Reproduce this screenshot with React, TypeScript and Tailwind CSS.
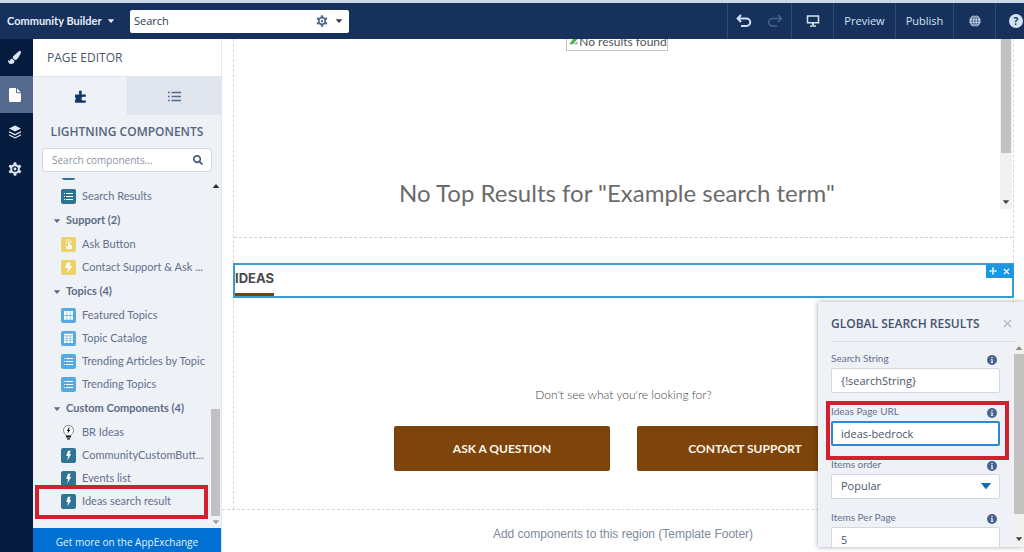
import React, { useState } from 'react';
import { FaPaintBrush, FaSearch } from 'react-icons/fa';
import { clsx } from 'clsx';

type IconKind = 'list' | 'touch' | 'bolt' | 'grid' | 'table' | 'bulb' | 'custom';

interface ComponentItem {
  name: string;
  icon: IconKind;
  color: string;
}

interface ComponentGroup {
  title: string;
  items: ComponentItem[];
}

const GROUPS: ComponentGroup[] = [
  {
    title: 'Support (2)',
    items: [
      { name: 'Ask Button', icon: 'touch', color: 'bg-[#ecd06a]' },
      { name: 'Contact Support & Ask ...', icon: 'bolt', color: 'bg-[#ecd06a]' },
    ],
  },
  {
    title: 'Topics (4)',
    items: [
      { name: 'Featured Topics', icon: 'grid', color: 'bg-[#56aadf]' },
      { name: 'Topic Catalog', icon: 'table', color: 'bg-[#56aadf]' },
      { name: 'Trending Articles by Topic', icon: 'list', color: 'bg-[#56aadf]' },
      { name: 'Trending Topics', icon: 'list', color: 'bg-[#56aadf]' },
    ],
  },
  {
    title: 'Custom Components (4)',
    items: [
      { name: 'BR Ideas', icon: 'bulb', color: 'bg-transparent' },
      { name: 'CommunityCustomButt...', icon: 'custom', color: 'bg-[#2f7494]' },
      { name: 'Events list', icon: 'custom', color: 'bg-[#2f7494]' },
      { name: 'Ideas search result', icon: 'custom', color: 'bg-[#2f7494]' },
    ],
  },
];

const Caret = ({ className }: { className?: string }) => (
  <svg viewBox="0 0 8 5" className={clsx('shrink-0', className)} fill="currentColor" aria-hidden="true">
    <path d="M0.5 0h7a.4.4 0 0 1 .3.7L4.4 4.7a.5.5 0 0 1-.8 0L.2.7A.4.4 0 0 1 .5 0z" />
  </svg>
);

const GearIcon = ({ className }: { className?: string }) => (
  <svg viewBox="0 0 24 24" className={className} aria-hidden="true">
    <g fill="currentColor">
      <rect x="9.5" y="0.5" width="5" height="23" rx="1.5" />
      <rect x="9.5" y="0.5" width="5" height="23" rx="1.5" transform="rotate(60 12 12)" />
      <rect x="9.5" y="0.5" width="5" height="23" rx="1.5" transform="rotate(120 12 12)" />
    </g>
    <circle cx="12" cy="12" r="6.6" fill="var(--hole)" stroke="currentColor" strokeWidth="3.4" />
    <circle cx="12" cy="12" r="2.4" fill="currentColor" />
  </svg>
);

const ComponentIcon = ({ kind }: { kind: IconKind }) => {
  switch (kind) {
    case 'list':
      return (
        <svg viewBox="0 0 15 15" className="size-[15px]" stroke="white" strokeWidth="1.1">
          <path d="M5 4.5h7M5 7.5h7M5 10.5h7M3 4.5h1M3 7.5h1M3 10.5h1" />
        </svg>
      );
    case 'touch':
      return (
        <svg viewBox="0 0 15 15" className="size-[15px]" fill="white">
          <path d="M7 5a.8.8 0 0 1 1.6 0v2.6l2 .6c.6.2.8.6.7 1.1l-.5 2.7H6.6L4.3 9.4c.5-.7 1.3-.6 1.9 0L7 10z" />
          <path d="M5.6 6.6a2.5 2.5 0 1 1 4.2-.2" fill="none" stroke="white" strokeWidth="0.8" />
        </svg>
      );
    case 'bolt':
      return (
        <svg viewBox="0 0 15 15" className="size-[15px]" fill="white">
          <path d="M6 2.5h4L8.6 6h3L6 13l1.3-5H3.8z" />
        </svg>
      );
    case 'grid':
      return (
        <svg viewBox="0 0 15 15" className="size-[15px]" fill="white">
          <path d="M3 3h2.6v4H3zM6.2 3h2.6v4H6.2zM9.4 3H12v4H9.4zM3 7.8h2.6v4H3zM6.2 7.8h2.6v4H6.2zM9.4 7.8H12v4H9.4z" />
        </svg>
      );
    case 'table':
      return (
        <svg viewBox="0 0 15 15" className="size-[15px]" fill="white">
          <path d="M3 2.8h9v1.8H3zM3 5.2h2.6v1.8H3zM6.2 5.2h2.6v1.8H6.2zM9.4 5.2H12v1.8H9.4zM3 7.6h2.6v1.8H3zM6.2 7.6h2.6v1.8H6.2zM9.4 7.6H12v1.8H9.4zM3 10h2.6v2H3zM6.2 10h2.6v2H6.2zM9.4 10H12v2H9.4z" />
        </svg>
      );
    case 'bulb':
      return (
        <svg viewBox="0 0 15 15" className="size-[15px]">
          <path
            d="M5 10.4C4.6 9 2.5 8.2 2.5 5.4a5 5 0 0 1 10 0c0 2.8-2.1 3.6-2.5 5z"
            fill="white"
            stroke="#555"
            strokeWidth="0.7"
          />
          <path d="M7.8 2.5L5.9 6h1.3l-.7 2.8L9.2 5.1H7.9l.8-2.6z" fill="#111" />
          <path d="M5 10.8h5v1.8H5zM6 13.2h3v1.3H6z" fill="#111" />
        </svg>
      );
    default:
      return (
        <svg viewBox="0 0 15 15" className="size-[15px]" fill="white">
          <path d="M7 2.8h2.6L8.5 6h1.7L6.3 12.4l.8-4.4H5.2z" />
        </svg>
      );
  }
};

const ComponentRow = ({ item }: { item: ComponentItem }) => (
  <li className="flex h-[23px] items-center gap-[6px] pl-7">
    <span className={clsx('flex size-[15px] shrink-0 rounded-[2px]', item.color)}>
      <ComponentIcon kind={item.icon} />
    </span>
    <span className="whitespace-nowrap text-[11px] text-[#64708e]">{item.name}</span>
  </li>
);

const TopBar = () => (
  <header className="flex h-[39px] shrink-0 items-stretch border-t-[3px] border-[#c9d8e6] bg-[#16325c] text-[11px] text-[#d3e1f5]">
    <button className="flex w-[130px] items-center gap-[6px] whitespace-nowrap pl-[7px] font-['Lato',sans-serif] font-bold text-[#e6eefa]">
      Community Builder
      <Caret className="h-1 w-[6px]" />
    </button>
    <div className="flex items-center">
      <button className="flex h-[23px] w-[219px] items-center rounded-[2px] bg-white px-1 text-[#2b3a55] [--hole:#fff]">
        <span className="flex-1 text-left">Search</span>
        <GearIcon className="size-3 text-[#54698d]" />
        <Caret className="ml-2 mr-[3px] h-1 w-[6px]" />
      </button>
    </div>
    <div className="ml-auto flex items-stretch [&>*]:border-l [&>*]:border-[#2f4a73]">
      <div className="flex w-16 items-center justify-around">
        <button aria-label="Undo">
          <svg viewBox="0 0 16 14" className="h-[14px] w-4" fill="none" stroke="currentColor" strokeWidth="2">
            <path d="M2 4.5h8.500a3.700 3.700 0 0 1 0 7.500H5" />
            <path d="M5 1L1.600 4.500 5 8" />
          </svg>
        </button>
        <button aria-label="Redo" className="text-[#48638a]">
          <svg viewBox="0 0 16 14" className="h-[14px] w-4" fill="none" stroke="currentColor" strokeWidth="1.6">
            <path d="M14 4.5H5.500a3.700 3.700 0 0 0 0 7.500H10" />
            <path d="M11 1l3.400 3.500L11 8" />
          </svg>
        </button>
      </div>
      <button aria-label="Desktop view" className="flex w-[42px] items-center justify-center">
        <svg viewBox="0 0 14 12" className="h-3 w-[14px]" fill="none" stroke="currentColor" strokeWidth="1.5">
          <path d="M1.5 1h11v6.800h-11z" />
          <path d="M7 8v2" strokeWidth="2" />
          <path d="M4 11h6" />
        </svg>
      </button>
      <button className="w-[62px]">Preview</button>
      <button className="w-[58px]">Publish</button>
      <button aria-label="Language" className="flex w-[42px] items-center justify-center">
        <svg viewBox="0 0 12 12" className="size-3">
          <circle cx="6" cy="6" r="5.7" fill="currentColor" />
          <g fill="none" stroke="#16325c" strokeWidth="0.6">
            <path d="M6 0v12M0 6h12M1 3.2h10M1 8.8h10" />
            <ellipse cx="6" cy="6" rx="2.8" ry="5.7" />
          </g>
        </svg>
      </button>
      <button aria-label="Help" className="flex w-[29px] items-center overflow-hidden pl-[13px]">
        <span className="flex size-[14px] shrink-0 items-center justify-center rounded-full bg-[#d3e1f5] text-[10px] font-bold text-[#16325c]">
          ?
        </span>
      </button>
    </div>
  </header>
);

const Rail = () => (
  <nav className="flex w-[33px] shrink-0 flex-col bg-[#061c3f] text-[#dfe7f2] [--hole:#061c3f] [&>button]:flex [&>button]:h-[37px] [&>button]:items-center [&>button]:justify-center [&>button]:pr-1">
    <button aria-label="Branding">
      <FaPaintBrush className="size-[13px]" />
    </button>
    <button aria-label="Page editor" className="bg-[#566a90] text-white">
      <svg viewBox="0 0 12 14" className="h-[14px] w-3" fill="currentColor">
        <path d="M1.5 0H7v4a1.200 1.200 0 0 0 1.200 1.200H12v7.300A1.500 1.500 0 0 1 10.500 14h-9A1.500 1.500 0 0 1 0 12.500v-11A1.500 1.500 0 0 1 1.500 0z" />
        <path d="M8 .3L11.700 4.300H8.400A.4.400 0 0 1 8 3.900z" />
      </svg>
    </button>
    <button aria-label="Page manager">
      <svg viewBox="0 0 14 14" className="size-[14px]" fill="currentColor">
        <path d="M7 .5l6 3-6 3-6-3z" />
        <path d="M1 6l6 3 6-3v1.400l-6 3-6-3zM1 9.300l6 3 6-3v1.300l-6 3-6-3z" />
      </svg>
    </button>
    <button aria-label="Settings">
      <GearIcon className="size-[14px]" />
    </button>
  </nav>
);

const Sidebar = () => {
  const [query, setQuery] = useState('');

  return (
    <aside className="relative flex w-[189px] shrink-0 flex-col border-r border-[#e3e6ec] bg-[#eef1f6]">
      <h2 className="h-[37px] shrink-0 bg-white pl-[14px] text-xs font-medium leading-[37px] text-[#4a5568]">PAGE EDITOR</h2>

      <div className="flex h-[39px] shrink-0 border-t border-[#dde2ea]">
        <button aria-label="Components" className="flex flex-1 items-center justify-center text-[#0f3a66]">
          <svg viewBox="0 0 11 13" className="h-[13px] w-[11px]" fill="currentColor">
            <path d="M1 4.500h2.800c.5 0 .6-.5.400-.9-.8-1.400-.1-3.200 1.200-3.200s2 1.800 1.200 3.200c-.2.400-.1.900.4.900h2.900c.6 0 1 .4 1 1v1.300H8.500c-1.300 0-2 .8-2 1.900s.7 1.900 2 1.900h2.400v1.200c0 .6-.4 1-1 1H1c-.6 0-1-.4-1-1V9.700h.7V7.600H0V5.500c0-.6.4-1 1-1z" />
          </svg>
        </button>
        <button aria-label="Page structure" className="flex flex-1 items-center justify-center bg-[#e0e5ee] text-[#54698d]">
          <svg viewBox="0 0 13 11" className="h-[11px] w-[13px]" stroke="currentColor" strokeWidth="1.3">
            <path d="M3.5 1.5H13M3.5 5.5H13M3.5 9.5H13M0 1.5h1.700M0 5.5h1.700M0 9.5h1.700" />
          </svg>
        </button>
      </div>

      <h3 className="h-[33px] shrink-0 text-center text-xs font-semibold leading-[34px] text-[#54647f]">LIGHTNING COMPONENTS</h3>

      <div className="mx-[9px] flex h-6 shrink-0 items-center rounded-[3px] border border-[#d3d8e0] bg-white pl-[9px] pr-2">
        <input
          type="text"
          aria-label="Search components"
          placeholder="Search components..."
          value={query}
          onChange={e => setQuery(e.target.value)}
          className="min-w-0 flex-1 text-[10px] outline-none placeholder:text-[#8a93a3]"
        />
        <FaSearch className="size-[10px] text-[#3c4f70]" />
      </div>

      {/* Component list with its scroll track */}
      <div className="mt-[6px] flex min-h-0 flex-1">
        <div className="min-w-0 flex-1 overflow-hidden font-['Lato',sans-serif]">
          <div className="mb-[5px] ml-[29px] h-[2px] w-[13px] rounded-b-[2px] bg-[#2f7494]"></div>
          <ul>
            <ComponentRow item={{ name: 'Search Results', icon: 'list', color: 'bg-[#2f7494]' }} />
          </ul>
          {GROUPS.map(group => (
            <section key={group.title}>
              <h4 className="flex h-[25px] items-center gap-[6px] pl-[21px] text-[11px] font-bold text-[#5d6b88]">
                <Caret className="h-1 w-[6px]" />
                {group.title}
              </h4>
              <ul>
                {group.items.map(item => (
                  <ComponentRow key={item.name} item={item} />
                ))}
              </ul>
            </section>
          ))}
        </div>
        <div className="flex w-[11px] shrink-0 flex-col items-center pb-1 pt-[6px]">
          <Caret className="h-1 w-[6px] rotate-180 text-[#333]" />
          <div className="flex-[220]"></div>
          <div className="w-[9px] flex-[107] bg-[#c1c1c1]"></div>
          <Caret className="mt-1 h-1 w-[6px] text-[#999]" />
        </div>
      </div>

      <button className="h-6 shrink-0 bg-[#0070d2] pt-1 text-[10px] font-medium text-[#e4f0fc]">Get more on the AppExchange</button>

      <div className="pointer-events-none absolute bottom-[33px] left-[2px] h-[34px] w-[173px] border-4 border-[#d3202f]"></div>
    </aside>
  );
};

const Field = ({ id, label, children }: { id: string; label: string; children: React.ReactNode }) => (
  <div className="h-[53px] shrink-0">
    <div className="flex h-4 items-start justify-between pr-[3px]">
      <label htmlFor={id} className="font-['Lato',sans-serif] text-[10px] leading-3 text-[#64708e]">{label}</label>
      <svg viewBox="0 0 10 10" className="mt-[3px] size-[10px]" role="img" aria-label="Info">
        <circle cx="5" cy="5" r="5" fill="#4a6290" />
        <path d="M4.300 2h1.400v1.300H4.300zM3.900 4.200h1.800v3h.5V8H3.900v-.8h.5V5h-.5z" fill="#eef1f6" />
      </svg>
    </div>
    {children}
  </div>
);

const PropertyPanel = () => {
  const [order, setOrder] = useState('Popular');

  return (
    <div className="absolute bottom-[5px] right-0 flex h-[245px] w-[206px] flex-col bg-[#eef1f6] font-['Open_Sans',sans-serif] shadow-[0_0_5px_rgba(0,0,0,0.35)]">
      <div className="ml-[13px] mr-2 flex h-10 shrink-0 items-center justify-between border-b border-[#d8dde6] pt-1">
        <h2 className="whitespace-nowrap text-xs font-semibold text-[#44536e]">GLOBAL SEARCH RESULTS</h2>
        <button aria-label="Close" className="mr-1 text-[#a8b0bd]">
          <svg viewBox="0 0 10 10" className="size-[9px]" stroke="currentColor" strokeWidth="1.3">
            <path d="M1 1l8 8M9 1L1 9" />
          </svg>
        </button>
      </div>

      <div className="flex min-h-0 flex-1">
        <form className="flex min-w-0 flex-1 flex-col overflow-hidden pl-[13px] pr-[13px] pt-[10px] text-[11px] text-[#4a5568]">
          <Field id="search-string" label="Search String">
            <input id="search-string" defaultValue="{!searchString}" className="h-[25px] w-full rounded-[2px] border border-[#d3d8e0] bg-white px-[9px] outline-none" />
          </Field>
          <Field id="ideas-url" label="Ideas Page URL">
            <input id="ideas-url" defaultValue="ideas-bedrock" className="h-[25px] w-full rounded-[2px] border-2 border-[#2f86d6] bg-white px-2 outline-none" />
          </Field>
          <Field id="items-order" label="Items order">
            <div className="relative">
              <select
                id="items-order"
                value={order}
                onChange={e => setOrder(e.target.value)}
                className="h-[25px] w-full appearance-none rounded-[2px] border border-[#d3d8e0] bg-white px-[9px] outline-none"
              >
                <option>Popular</option>
                <option>Recent</option>
              </select>
              <Caret className="pointer-events-none absolute right-[9px] top-[9px] h-[6px] w-[10px] text-[#0f6cbd]" />
            </div>
          </Field>
          <Field id="items-per-page" label="Items Per Page">
            <input id="items-per-page" defaultValue="5" className="h-[25px] w-full rounded-[2px] border border-[#d3d8e0] bg-white px-[9px] outline-none" />
          </Field>
        </form>
        <div className="flex w-[11px] shrink-0 flex-col items-center bg-[#f1f1f1] pb-[6px] pt-1">
          <Caret className="h-1 w-[6px] rotate-180 text-[#8f8f8f]" />
          <div className="mt-1 w-[10px] flex-[160] bg-[#c1c1c1]"></div>
          <div className="flex-[23]"></div>
          <Caret className="h-1 w-[6px] text-[#444]" />
        </div>
      </div>

      <div className="pointer-events-none absolute left-2 top-[99px] h-[59px] w-[183px] border-4 border-[#d3202f]"></div>
    </div>
  );
};

const Canvas = () => (
  <main className="relative flex min-w-0 flex-1 flex-col overflow-hidden bg-white font-['Lato',sans-serif]">
    <div className="ml-[11px] mr-[10px] flex flex-1 flex-col border-x border-dashed border-[#d9d9d9]">
      {/* Top results region */}
      <section className="h-[199px] shrink-0 border-b border-dashed border-[#d0d0d0]">
        <div className="flex h-[170px] pr-[1px]">
          <div className="flex min-w-0 flex-1 flex-col items-center overflow-hidden">
            <div className="flex h-3 shrink-0 items-end border-x border-b border-[#c4c4c4] text-xs text-[#555]">
              <svg viewBox="0 0 12 8" className="mb-[5px] h-[6px] w-3">
                <path d="M1 7L6 0h6L6 7z" fill="#4caf50" />
                <path d="M7 7l5-4v4z" fill="#9aa8b8" />
              </svg>
              No results found
            </div>
            <h1 className="mt-auto whitespace-nowrap text-2xl text-[#6b6b6b]">No Top Results for "Example search term"</h1>
          </div>
          <div className="flex w-3 shrink-0 flex-col items-center bg-[#f1f1f1] pb-[5px]">
            <div className="h-[114px] w-[10px] bg-[#c1c1c1]"></div>
            <Caret className="mt-auto h-1 w-[6px] text-[#444]" />
          </div>
        </div>
      </section>

      {/* Selected component */}
      <section className="relative -mx-px mt-[25px] flex h-[35px] shrink-0 items-stretch border-2 border-[#3a9bd0]">
        <h2 className="flex items-center border-b-[3px] border-[#7a430c] font-['Inter',sans-serif] text-[13px] font-bold text-[#4a4a4a]">IDEAS</h2>
        <div className="absolute -right-px -top-px flex h-[14px] w-[27px] items-center justify-around bg-[#1b96e0] text-white">
          <button aria-label="Move">
            <svg viewBox="0 0 8 8" className="size-2" stroke="currentColor" strokeWidth="1.2" fill="currentColor">
              <path d="M4 1v6M1 4h6" />
              <path d="M4 0l1.200 1.500H2.800zM4 8l1.200-1.500H2.800zM0 4l1.500-1.200v2.400zM8 4L6.500 2.800v2.400z" stroke="none" />
            </svg>
          </button>
          <button aria-label="Remove">
            <svg viewBox="0 0 8 8" className="size-[7px]" stroke="currentColor" strokeWidth="1.6">
              <path d="M1 1l6 6M7 1L1 7" />
            </svg>
          </button>
        </div>
      </section>

      <section className="flex flex-1 flex-col items-center justify-end pb-[38px]">
        <p className="text-xs font-light text-[#444]">Don't see what you're looking for?</p>
        <div className="mt-[23px] flex gap-[27px]">
          <button className="h-[45px] w-[216px] rounded-[2px] bg-[#7d440b] text-xs font-bold text-[#fdf6ec]">ASK A QUESTION</button>
          <button className="h-[45px] w-[216px] rounded-[2px] bg-[#7d440b] text-xs font-bold text-[#fdf6ec]">CONTACT SUPPORT</button>
        </div>
      </section>
    </div>

    <footer className="flex h-[43px] shrink-0 items-center justify-center border-t border-dashed border-[#d9d9d9] pt-[5px] font-['Liberation_Sans',Arial,sans-serif] text-xs text-[#7c8a9c]">
      Add components to this region (Template Footer)
    </footer>

    <PropertyPanel />
  </main>
);

const App: React.FC = () => {
  return (
    <div className="flex h-screen flex-col overflow-hidden font-['Open_Sans',sans-serif]">
      <TopBar />
      <div className="flex min-h-0 flex-1">
        <Rail />
        <Sidebar />
        <Canvas />
      </div>
    </div>
  );
};

export default App;
